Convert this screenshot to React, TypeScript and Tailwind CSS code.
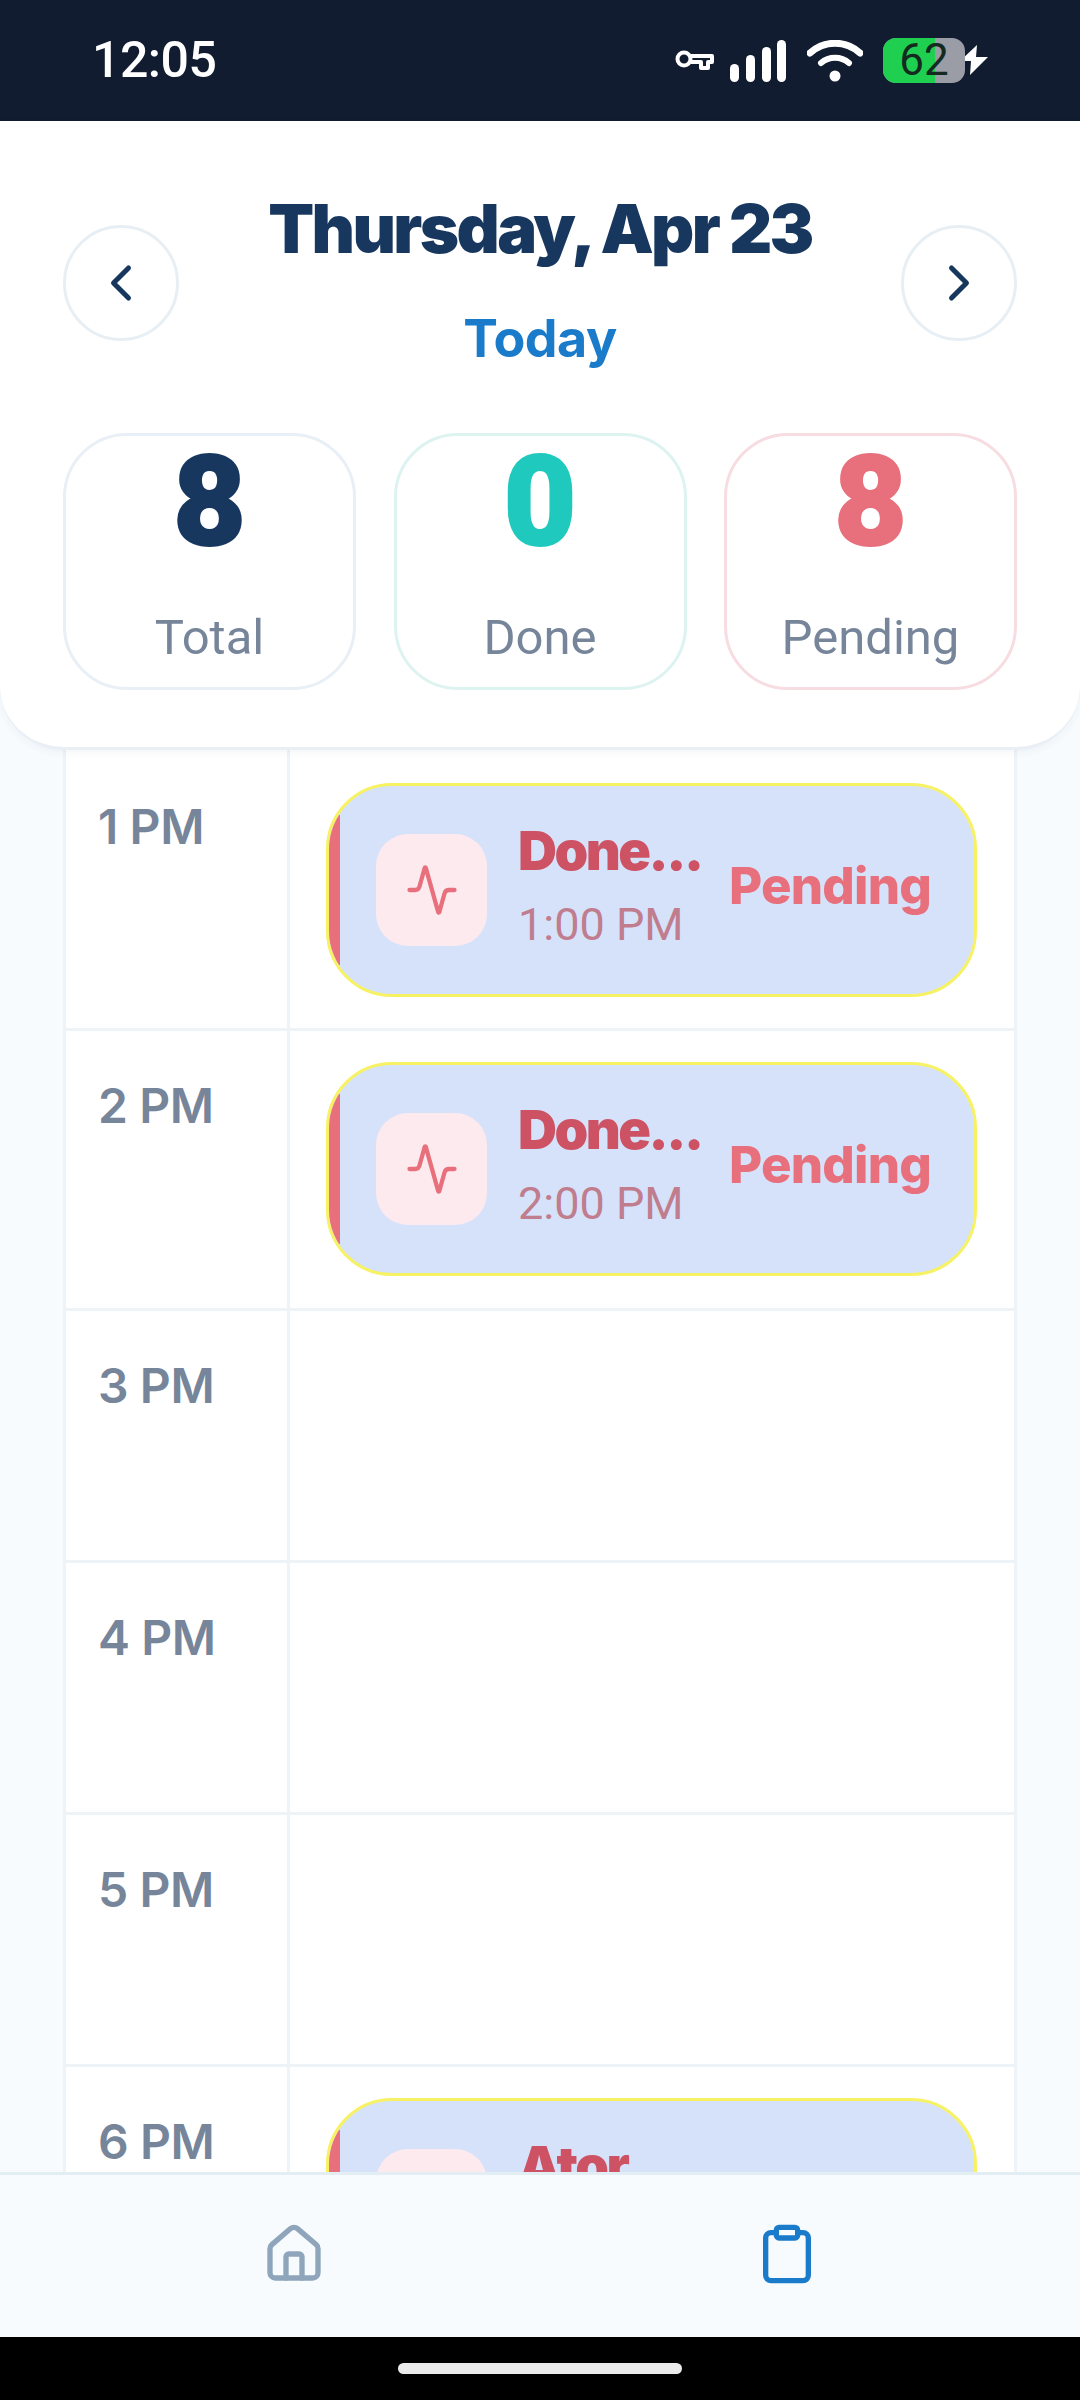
import { Activity, ChevronLeft, ChevronRight, Clipboard, House } from "lucide-react";

type StatProps = { value: string; label: string; valueClass: string; borderClass: string };

function StatCard({ value, label, valueClass, borderClass }: StatProps) {
  return (
    <div className={`flex h-[257px] w-[293px] flex-col items-center rounded-[64px] border-[3px] bg-white ${borderClass}`}>
      <div className={`mt-[-11px] h-[155px] font-['Roboto'] text-[126px] leading-[155px] font-black [-webkit-text-stroke:2px_currentColor] ${valueClass}`}>{value}</div>
      <div className="mt-[28px] font-['Roboto'] text-[49px] leading-[60px] text-[#76859a]">{label}</div>
    </div>
  );
}

function EventCard({ title, time }: { title: string; time: string }) {
  return (
    <div className="flex h-[214px] w-[651px] shrink-0 items-center overflow-hidden rounded-[66px] border-[3px] border-[#f7f264] bg-[#d6e2fa]">
      <div className="h-[150px] w-[11px] shrink-0 bg-[#e86f7c]" />
      <div className="ml-[36px] flex h-[112px] w-[111px] shrink-0 items-center justify-center rounded-[32px] bg-[#fdeaee]">
        <Activity size={54} strokeWidth={1.9} className="text-[#e86f7c]" />
      </div>
      <div className="ml-[31px] w-[182px] shrink-0">
        <div className="mt-[-9px] font-['Inter'] text-[54px] leading-[64px] font-black tracking-[-2.5px] whitespace-nowrap text-[#cd5364]">{title}</div>
        <div className="mt-[14px] font-['Roboto'] text-[45px] leading-[56px] whitespace-nowrap text-[#bf7d8e]">{time}</div>
      </div>
      <div className="mt-[-9px] ml-[29px] font-['Inter'] text-[51px] leading-[60px] font-extrabold tracking-[-0.8px] text-[#e86f7c]">Pending</div>
    </div>
  );
}

function HourRow({ hour, rowClass, slotClass, labelClass, children }: {
  hour: string;
  rowClass: string;
  slotClass?: string;
  labelClass?: string;
  children?: React.ReactNode;
}) {
  return (
    <div className={`flex shrink-0 border-b-[3px] border-[#eef3f7] ${rowClass}`}>
      <div className={`w-[224px] shrink-0 border-r-[3px] border-[#eef3f7] pl-[32px] font-['Inter'] text-[48px] leading-[60px] font-semibold tracking-[-0.4px] text-[#76859a] ${labelClass ?? "pt-[45px]"}`}>
        {hour}
      </div>
      <div className={`flex-1 pl-[36px] ${slotClass ?? "pt-[31px]"}`}>{children}</div>
    </div>
  );
}

function StatusIcons() {
  return (
    <div className="flex items-center">
      <svg width="40" height="24" viewBox="0 0 40 24" fill="none" stroke="#fff" strokeWidth="4">
        <circle cx="9" cy="10" r="6.5" />
        <path d="M16 7h21v6h-4v6h-7v-6H16" strokeLinejoin="round" />
      </svg>
      <svg width="58" height="42" viewBox="0 0 58 42" fill="#fff" className="ml-[14px]">
        <rect x="1" y="24" width="9" height="18" rx="4.5" />
        <rect x="17" y="15" width="9" height="27" rx="4.5" />
        <rect x="33" y="7" width="9" height="35" rx="4.5" />
        <rect x="48" y="0" width="9" height="42" rx="4.5" />
      </svg>
      <svg width="56" height="42" viewBox="0 0 56 42" fill="none" stroke="#fff" strokeLinecap="round" className="ml-[20px]">
        <path d="M3 13C17 0 39 0 53 13" strokeWidth="7" />
        <path d="M14 23c8-7 20-7 28 0" strokeWidth="6" />
        <circle cx="28" cy="36" r="5.5" fill="#fff" stroke="none" />
      </svg>
      <div className="relative ml-[20px] flex h-[45px] w-[82px] rounded-[13px] bg-[#9a9ca6]">
        <div className="h-full w-[52px] rounded-l-[13px] bg-[#1fcf4f]" />
        <span className="absolute inset-0 text-center font-['Roboto'] text-[44px] leading-[45px] text-[#142a20]">62</span>
      </div>
      <svg width="32" height="36" viewBox="-2 -2 32 36" fill="#fff" stroke="#111c30" strokeWidth="3" paintOrder="stroke" className="ml-[-7px]">
        <path d="M17 0 0 16h11l-1 14L28 12H16z" />
      </svg>
    </div>
  );
}

export default function App() {
  return (
    <div className="flex h-[2400px] w-[1080px] flex-col overflow-hidden bg-[#f7fbfe]">
      <div className="flex h-[121px] shrink-0 items-center justify-between bg-[#111c30] pr-[90px] pl-[92px]">
        <span className="font-['Roboto'] text-[50px] font-medium tracking-[-0.5px] text-white">12:05</span>
        <StatusIcons />
      </div>

      <div className="relative z-10 h-[629px] shrink-0 rounded-b-[64px] border-b-[3px] border-[#e9eff5] bg-white px-[63px] shadow-[0_2px_8px_rgba(20,50,90,0.05)]">
        <div className="flex h-[312px] justify-between pt-[104px]">
          <button className="flex h-[116px] w-[116px] items-center justify-center rounded-full border-[3px] border-[#e8eff4] text-[#17375e]">
            <ChevronLeft size={60} strokeWidth={2} />
          </button>
          <div className="mt-[-104px] pt-[60px] text-center">
            <div className="font-['Inter'] text-[67px] leading-[96px] font-black tracking-[-2.6px] text-[#17375e]">Thursday, Apr 23</div>
            <div className="mt-[32px] font-['Inter'] text-[52px] leading-[60px] font-bold tracking-[-0.5px] text-[#1b7bcb]">Today</div>
          </div>
          <button className="flex h-[116px] w-[116px] items-center justify-center rounded-full border-[3px] border-[#e8eff4] text-[#17375e]">
            <ChevronRight size={60} strokeWidth={2} />
          </button>
        </div>
        <div className="flex justify-between">
          <StatCard value="8" label="Total" valueClass="text-[#17375e]" borderClass="border-[#e8eff6]" />
          <StatCard value="0" label="Done" valueClass="text-[#20c9bd]" borderClass="border-[#dcf3f0]" />
          <StatCard value="8" label="Pending" valueClass="text-[#e86f7c]" borderClass="border-[#f7dde2]" />
        </div>
      </div>

      <div className="mx-[63px] flex h-[1422px] shrink-0 flex-col overflow-hidden border-x-[3px] border-[#eef3f7] bg-white">
        <HourRow hour="1 PM" rowClass="h-[281px]" slotClass="pt-[33px]" labelClass="pt-[47px]">
          <EventCard title="Done..." time="1:00 PM" />
        </HourRow>
        <HourRow hour="2 PM" rowClass="h-[280px]">
          <EventCard title="Done..." time="2:00 PM" />
        </HourRow>
        <HourRow hour="3 PM" rowClass="h-[252px]" />
        <HourRow hour="4 PM" rowClass="h-[252px]" />
        <HourRow hour="5 PM" rowClass="h-[252px]" />
        <HourRow hour="6 PM" rowClass="h-[280px]">
          <EventCard title="Ator" time="6:00 PM" />
        </HourRow>
      </div>

      <div className="flex h-[165px] shrink-0 justify-between border-t-[3px] border-[#e3edf4] bg-[#f7fbfe] pt-[47px] pr-[261px] pl-[262px]">
        <House size={64} strokeWidth={2} className="text-[#8ea5bc]" />
        <Clipboard size={64} strokeWidth={2} className="text-[#1b7bcb]" />
      </div>

      <div className="flex h-[63px] shrink-0 justify-center bg-black pt-[26px]">
        <div className="h-[11px] w-[284px] rounded-full bg-[#ebebeb]" />
      </div>
    </div>
  );
}
